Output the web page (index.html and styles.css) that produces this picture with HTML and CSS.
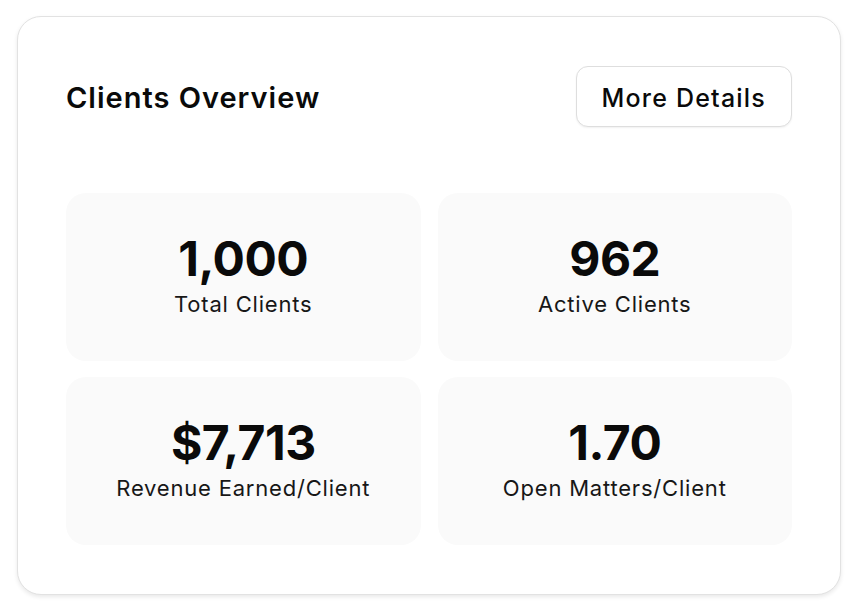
FILE: index.html
```html
<!DOCTYPE html>
<html lang="en">
<head>
<meta charset="utf-8">
<title>Clients Overview</title>
<link rel="stylesheet" href="styles.css">
</head>
<body>
<section class="card">
  <header class="card-header">
    <h2 class="title">Clients Overview</h2>
    <button class="btn" type="button">More Details</button>
  </header>
  <div class="stats">
    <div class="stat">
      <div class="value">1,000</div>
      <div class="label">Total Clients</div>
    </div>
    <div class="stat">
      <div class="value">962</div>
      <div class="label">Active Clients</div>
    </div>
    <div class="stat">
      <div class="value">$7,713</div>
      <div class="label">Revenue Earned/Client</div>
    </div>
    <div class="stat">
      <div class="value">1.70</div>
      <div class="label">Open Matters/Client</div>
    </div>
  </div>
</section>
</body>
</html>
```

FILE: styles.css
```css
* { box-sizing: border-box; }
html, body { margin: 0; background: #ffffff; }
body {
  padding: 16px 17px;
  font-family: Inter, "Noto Sans", sans-serif;
  color: #0a0a0a;
}
.card {
  border: 1px solid #e2e2e2;
  border-radius: 24px;
  background: #fff;
  padding: 49px 48px 49px;
  box-shadow: 0 2px 4px rgba(0,0,0,0.09);
}
.card-header {
  display: flex;
  align-items: center;
  justify-content: space-between;
}
.title {
  margin: 0;
  padding-top: 2px;
  font-size: 29px;
  font-weight: 600;
  letter-spacing: 1px;
}
.btn {
  height: 61px;
  padding: 2px 25px 0;
  border: 1px solid #dedede;
  border-radius: 12px;
  background: #fff;
  font-family: inherit;
  font-size: 25px;
  font-weight: 500;
  letter-spacing: 1.2px;
  color: #0a0a0a;
  box-shadow: 0 1px 2px rgba(0,0,0,0.06);
}
.stats {
  margin-top: 66px;
  display: grid;
  grid-template-columns: 1fr 1fr;
  column-gap: 17px;
  row-gap: 16px;
}
.stat {
  height: 168px;
  padding-bottom: 9px;
  background: #fafafa;
  border-radius: 20px;
  display: flex;
  flex-direction: column;
  align-items: center;
  justify-content: center;
}
.value {
  font-size: 48px;
  font-weight: 700;
  line-height: 63px;
  letter-spacing: -0.5px;
}
.label {
  font-size: 22px;
  line-height: 28px;
  letter-spacing: 0.8px;
  color: #171717;
}
```
